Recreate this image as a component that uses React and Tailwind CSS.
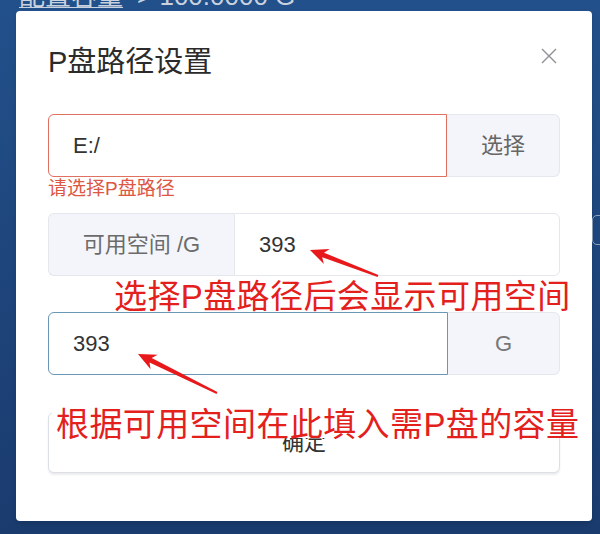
export default function App() {
  const font = "font-['Liberation_Sans','Noto_Sans_CJK_SC',sans-serif]";

  return (
    <div className={`relative h-[534px] w-[600px] overflow-hidden bg-linear-to-b from-[#22508a] to-[#1a3b6e] ${font}`}>
      {/* page behind the dialog */}
      <div className="-mt-[19px] flex h-[30px] items-center gap-[14px] pl-[19px] text-[26px] leading-[30px] text-[#c9d2de]">
        <span className="underline decoration-1 underline-offset-2">配置容量</span>
        <span>&gt; 100.0000 G</span>
      </div>
      <div className="absolute left-[592px] top-[215px] h-[30px] w-[20px] rounded-[5px] border border-[#8ea3c0]" />

      {/* dialog */}
      <div className="absolute left-[16px] top-[11px] h-[510px] w-[576px] rounded-[4px] bg-white px-[32px] pt-[31px] shadow-md">
        <div className="flex items-start justify-between">
          <h1 className="text-[29px] font-normal leading-[40px] text-[#2b2b2b]">P盘路径设置</h1>
          <svg className="mr-[2px] mt-[5px] h-[18px] w-[18px]" viewBox="0 0 18 18" fill="none" stroke="#8d9096" strokeWidth="1.4">
            <path d="M2 2 L16 16 M16 2 L2 16" />
          </svg>
        </div>

        <div className="mt-[32px] flex h-[63px]">
          <div className="flex flex-1 items-center rounded-l-[6px] border border-[#e0705f] pl-[24px] text-[22px] text-[#333]">E:/</div>
          <div className="flex w-[113px] items-center justify-center rounded-r-[6px] border border-l-0 border-[#e4e7ed] bg-[#f4f5fa] text-[22px] text-[#666]">
            选择
          </div>
        </div>
        <div className="h-[36px] pt-[1px] text-[19px] leading-[22px] text-[#dc5744]">请选择P盘路径</div>

        <div className="flex h-[63px]">
          <div className="flex w-[186px] items-center justify-center rounded-l-[6px] border border-r-0 border-[#e4e7ed] bg-[#f4f5fa] text-[22px] text-[#6b6b6b]">
            可用空间 /G
          </div>
          <div className="flex flex-1 items-center rounded-r-[6px] border border-[#e4e7ed] pl-[24px] text-[22px] text-[#333]">393</div>
        </div>

        <div className="mt-[36px] flex h-[63px]">
          <div className="flex flex-1 items-center rounded-l-[6px] border border-[#6a98b4] pl-[24px] text-[22px] text-[#333]">393</div>
          <div className="flex w-[112px] items-center justify-center rounded-r-[6px] border border-l-0 border-[#e4e7ed] bg-[#f4f5fa] text-[22px] text-[#777]">
            G
          </div>
        </div>

        <button className="mt-[37px] flex h-[61px] w-full items-center justify-center rounded-[6px] border border-[#dcdfe6] bg-white text-[22px] text-[#333] shadow-[0_2px_2px_rgba(0,0,0,0.08)]">
          确定
        </button>

        {/* annotations */}
        <div className="absolute left-[98px] top-[268px] whitespace-nowrap text-[33px] leading-[36px] tracking-[0.4px] text-[#e3201c]">
          选择P盘路径后会显示可用空间
        </div>
        <div className="absolute left-[36px] top-[387px] h-[40px] whitespace-nowrap bg-white pl-[4px] pr-[4px] text-[33px] leading-[54px] tracking-[0.4px] text-[#e3201c]">
          根据可用空间在此填入需P盘的容量
        </div>
      </div>

      {/* arrows */}
      <svg className="pointer-events-none absolute left-0 top-0" width="600" height="534" viewBox="0 0 600 534">
        <polygon
          fill="#e8191a"
          points="310,250 329.7,248.9 324,252.7 378.4,275.1 377.6,276.9 322.2,257.3 323.9,263.9"
        />
        <polygon
          fill="#e8191a"
          points="138,354 157.6,354.8 151.7,358 217.4,392.1 216.6,393.9 149.5,362.4 150.6,369.2"
        />
      </svg>
    </div>
  );
}
